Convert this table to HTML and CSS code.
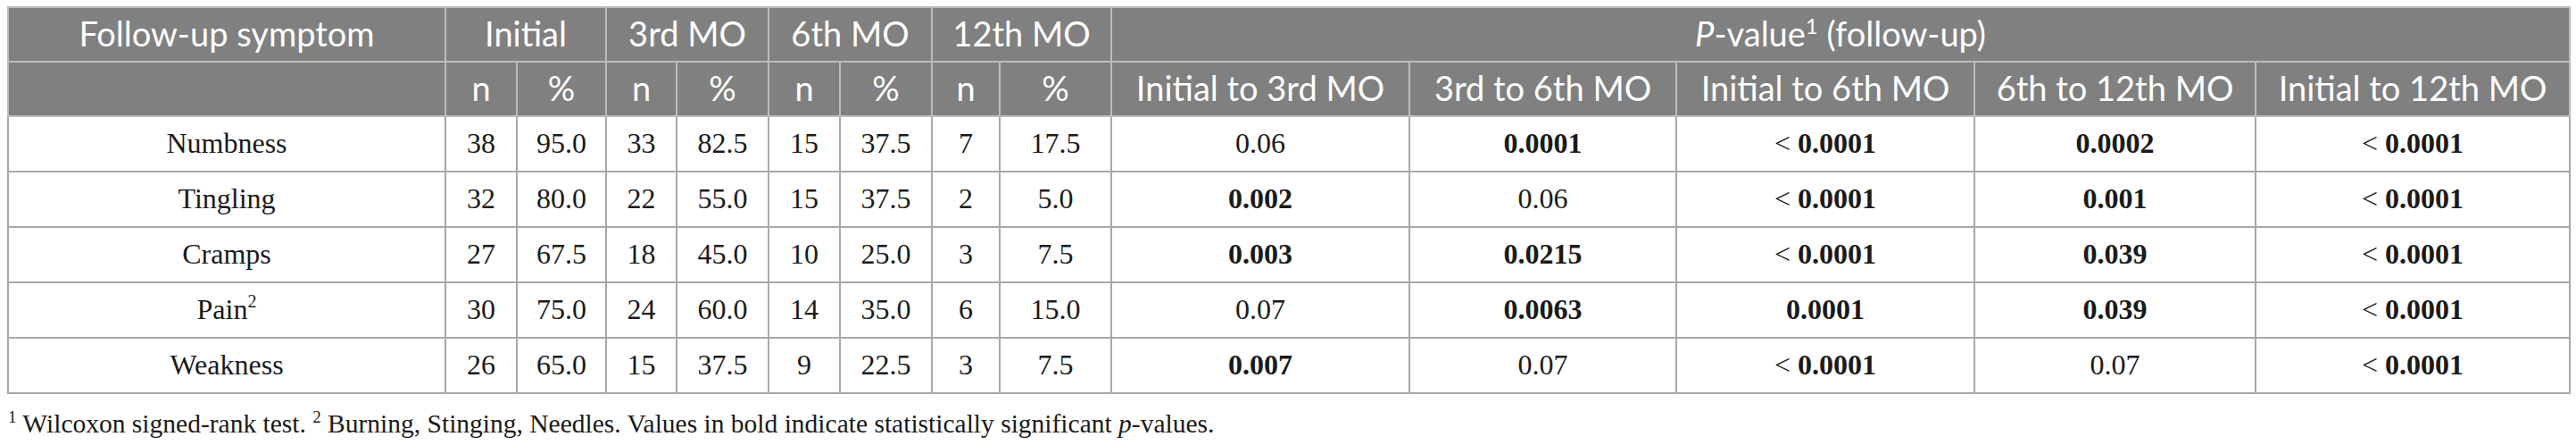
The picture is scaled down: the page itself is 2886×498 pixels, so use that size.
FILE: index.html
```html
<!DOCTYPE html>
<html lang="en">
<head>
<meta charset="utf-8">
<title>Follow-up symptoms</title>
<link rel="stylesheet" href="styles.css">
</head>
<body>
<div class="wrap">
<table class="tbl">
  <colgroup>
    <col class="c-sym">
    <col class="c-n1"><col class="c-p1">
    <col class="c-n2"><col class="c-p2">
    <col class="c-n3"><col class="c-p3">
    <col class="c-n4"><col class="c-p4">
    <col class="c-v1"><col class="c-v2"><col class="c-v3"><col class="c-v4"><col class="c-v5">
  </colgroup>
  <thead>
    <tr class="hrow">
      <th>Follow-up symptom</th>
      <th colspan="2">Initial</th>
      <th colspan="2">3rd MO</th>
      <th colspan="2">6th MO</th>
      <th colspan="2">12th MO</th>
      <th colspan="5"><i>P</i>-value<sup>1</sup> (follow-up)</th>
    </tr>
    <tr class="hrow">
      <th></th>
      <th>n</th><th>%</th>
      <th>n</th><th>%</th>
      <th>n</th><th>%</th>
      <th>n</th><th>%</th>
      <th>Initial to 3rd MO</th>
      <th>3rd to 6th MO</th>
      <th>Initial to 6th MO</th>
      <th>6th to 12th MO</th>
      <th>Initial to 12th MO</th>
    </tr>
  </thead>
  <tbody>
    <tr class="drow">
      <td>Numbness</td>
      <td>38</td><td>95.0</td><td>33</td><td>82.5</td><td>15</td><td>37.5</td><td>7</td><td>17.5</td>
      <td>0.06</td><td><b>0.0001</b></td><td>&lt; <b>0.0001</b></td><td><b>0.0002</b></td><td>&lt; <b>0.0001</b></td>
    </tr>
    <tr class="drow">
      <td>Tingling</td>
      <td>32</td><td>80.0</td><td>22</td><td>55.0</td><td>15</td><td>37.5</td><td>2</td><td>5.0</td>
      <td><b>0.002</b></td><td>0.06</td><td>&lt; <b>0.0001</b></td><td><b>0.001</b></td><td>&lt; <b>0.0001</b></td>
    </tr>
    <tr class="drow">
      <td>Cramps</td>
      <td>27</td><td>67.5</td><td>18</td><td>45.0</td><td>10</td><td>25.0</td><td>3</td><td>7.5</td>
      <td><b>0.003</b></td><td><b>0.0215</b></td><td>&lt; <b>0.0001</b></td><td><b>0.039</b></td><td>&lt; <b>0.0001</b></td>
    </tr>
    <tr class="drow">
      <td>Pain<sup>2</sup></td>
      <td>30</td><td>75.0</td><td>24</td><td>60.0</td><td>14</td><td>35.0</td><td>6</td><td>15.0</td>
      <td>0.07</td><td><b>0.0063</b></td><td><b>0.0001</b></td><td><b>0.039</b></td><td>&lt; <b>0.0001</b></td>
    </tr>
    <tr class="drow">
      <td>Weakness</td>
      <td>26</td><td>65.0</td><td>15</td><td>37.5</td><td>9</td><td>22.5</td><td>3</td><td>7.5</td>
      <td><b>0.007</b></td><td>0.07</td><td>&lt; <b>0.0001</b></td><td>0.07</td><td>&lt; <b>0.0001</b></td>
    </tr>
  </tbody>
</table>
<p class="note"><sup>1</sup> Wilcoxon signed-rank test. <sup>2</sup> Burning, Stinging, Needles. Values in bold indicate statistically significant <i>p</i>-values.</p>
</div>
</body>
</html>
```
FILE: styles.css
```css
html, body {
  margin: 0;
  padding: 0;
  background: #ffffff;
}

.wrap {
  padding: 7px 8px 0 8px;
}

.tbl {
  width: 100%;
  table-layout: fixed;
  border-collapse: collapse;
  border: 2px solid #a8a8a8;
}

.c-sym { width: 490px; }
.c-n1 { width: 80px; }
.c-p1 { width: 100px; }
.c-n2 { width: 79px; }
.c-p2 { width: 103px; }
.c-n3 { width: 80px; }
.c-p3 { width: 103px; }
.c-n4 { width: 76px; }
.c-p4 { width: 125px; }
.c-v1 { width: 334px; }
.c-v2 { width: 299px; }
.c-v3 { width: 334px; }
.c-v4 { width: 315px; }
.c-v5 { width: 352px; }

.hrow {
  height: 61px;
}

.hrow th {
  background: #808080;
  color: #ffffff;
  font-family: Lato, "Open Sans", sans-serif;
  font-weight: 400;
  font-size: 38px;
  line-height: 1;
  text-align: center;
  vertical-align: middle;
  padding: 0 4px 4px 4px;
  border: 2px solid #bcbcbc;
  white-space: nowrap;
}

.hrow th sup {
  font-size: 24px;
  line-height: 0;
  vertical-align: 14px;
}

.drow {
  height: 62px;
}

.drow td {
  font-family: "Liberation Serif", "Times New Roman", serif;
  font-size: 32px;
  line-height: 1;
  color: #1a1a1a;
  text-align: center;
  vertical-align: middle;
  padding: 0 4px 2px 4px;
  border: 2px solid #a8a8a8;
  white-space: nowrap;
}

.drow td b {
  font-weight: 700;
}

.drow td sup {
  font-size: 20px;
  line-height: 0;
  vertical-align: 13px;
}

.note {
  margin: 16px 0 0 1px;
  font-family: "Liberation Serif", "Times New Roman", serif;
  font-size: 29.5px;
  line-height: 1.2;
  color: #1a1a1a;
}

.note sup {
  font-size: 19px;
  line-height: 0;
  vertical-align: 11px;
}
```
